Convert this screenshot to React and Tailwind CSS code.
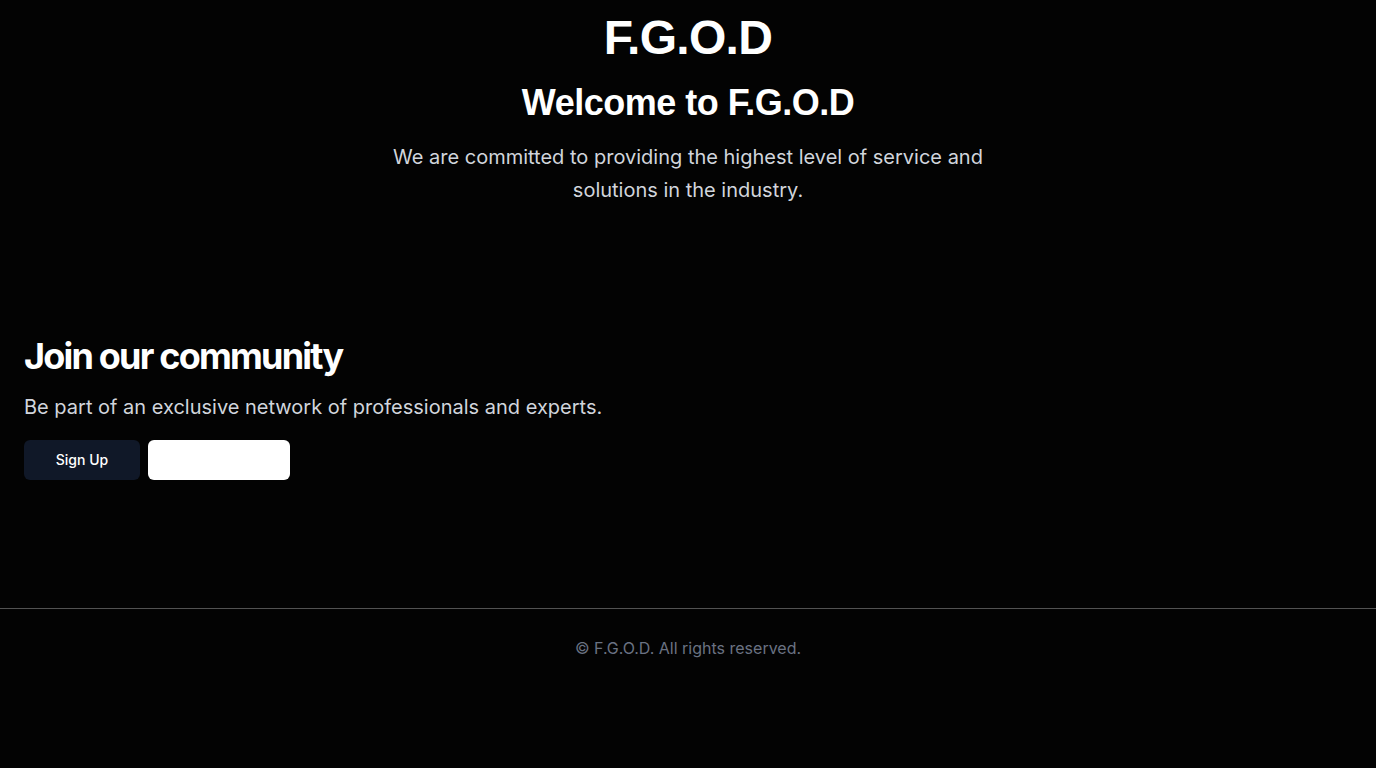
export default function App() {
    return (
        <div className="min-h-screen bg-[#030303] text-white flex flex-col" style={{ fontFamily: 'Inter, "Noto Sans", sans-serif' }}>

            <section className="flex flex-col items-center text-center pt-[14px]">
                <h1 className="text-5xl font-bold tracking-[-0.7px]" style={{ fontFamily: '"Liberation Sans", Arial, sans-serif' }}>F.G.O.D</h1>
                <h2 className="mt-[21px] text-4xl font-bold tracking-[-0.5px]" style={{ fontFamily: '"Liberation Sans", Arial, sans-serif' }}>Welcome to F.G.O.D</h2>
                <p className="mt-[18px] max-w-[620px] text-xl leading-relaxed text-gray-300">
                    We are committed to providing the highest level of service and solutions in the industry.
                </p>
            </section>

            <section className="px-6 mt-[130px]">
                <h2 className="text-4xl font-bold tracking-tighter">Join our community</h2>
                <p className="mt-[17px] text-xl text-gray-300">Be part of an exclusive network of professionals and experts.</p>
                <div className="mt-[19px] flex gap-2">
                    <button className="h-10 w-[116px] rounded-md bg-gray-900 text-sm font-medium text-white">Sign Up</button>
                    <button className="h-10 w-[142px] rounded-md bg-white text-sm font-medium text-white">Log In</button>
                </div>
            </section>

            <footer className="mt-[128px] border-t border-neutral-600 pt-[27px] pb-8 text-center text-gray-500">
                © F.G.O.D. All rights reserved.
            </footer>
        </div>
    );
}
